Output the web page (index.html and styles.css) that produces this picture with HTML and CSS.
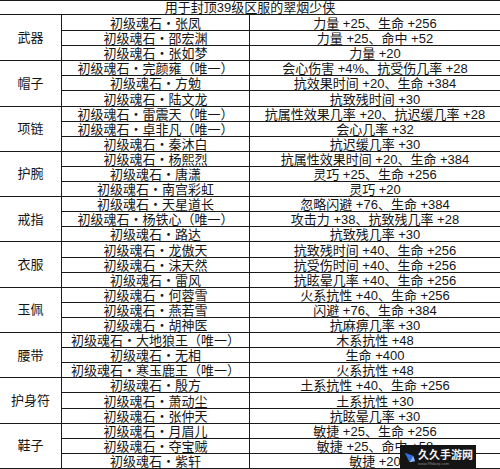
FILE: index.html
```html
<!DOCTYPE html>
<html lang="zh">
<head>
<meta charset="utf-8">
<link rel="stylesheet" href="styles.css">
</head>
<body>
<div class="sheet">
  <div class="title">用于封顶39级区服的翠烟少侠</div>

  <div class="cat">武器</div>
  <div class="item">初级魂石・张凤</div><div class="stat">力量 +25、生命 +256</div>
  <div class="item">初级魂石・邵宏渊</div><div class="stat">力量 +25、命中 +52</div>
  <div class="item">初级魂石・张如梦</div><div class="stat">力量 +20</div>

  <div class="cat">帽子</div>
  <div class="item">初级魂石・完颜雍（唯一）</div><div class="stat">会心伤害 +4%、抗受伤几率 +28</div>
  <div class="item">初级魂石・方勉</div><div class="stat">抗效果时间 +20、生命 +384</div>
  <div class="item">初级魂石・陆文龙</div><div class="stat">抗致残时间 +30</div>

  <div class="cat">项链</div>
  <div class="item">初级魂石・雷震天（唯一）</div><div class="stat">抗属性效果几率 +20、抗迟缓几率 +28</div>
  <div class="item">初级魂石・卓非凡（唯一）</div><div class="stat">会心几率 +32</div>
  <div class="item">初级魂石・秦沐白</div><div class="stat">抗迟缓几率 +30</div>

  <div class="cat">护腕</div>
  <div class="item">初级魂石・杨熙烈</div><div class="stat">抗属性效果时间 +20、生命 +384</div>
  <div class="item">初级魂石・唐潇</div><div class="stat">灵巧 +25、生命 +256</div>
  <div class="item">初级魂石・南宫彩虹</div><div class="stat">灵巧 +20</div>

  <div class="cat">戒指</div>
  <div class="item">初级魂石・天星道长</div><div class="stat">忽略闪避 +76、生命 +384</div>
  <div class="item">初级魂石・杨铁心（唯一）</div><div class="stat">攻击力 +38、抗致残几率 +28</div>
  <div class="item">初级魂石・路达</div><div class="stat">抗致残几率 +30</div>

  <div class="cat">衣服</div>
  <div class="item">初级魂石・龙傲天</div><div class="stat">抗致残时间 +40、生命 +256</div>
  <div class="item">初级魂石・沫天然</div><div class="stat">抗受伤时间 +40、生命 +256</div>
  <div class="item">初级魂石・雷风</div><div class="stat">抗眩晕几率 +40、生命 +256</div>

  <div class="cat">玉佩</div>
  <div class="item">初级魂石・何蓉雪</div><div class="stat">火系抗性 +40、生命 +256</div>
  <div class="item">初级魂石・燕若雪</div><div class="stat">闪避 +76、生命 +384</div>
  <div class="item">初级魂石・胡神医</div><div class="stat">抗麻痹几率 +30</div>

  <div class="cat">腰带</div>
  <div class="item">初级魂石・大地狼王（唯一）</div><div class="stat">木系抗性 +48</div>
  <div class="item">初级魂石・无相</div><div class="stat">生命 +400</div>
  <div class="item">初级魂石・寒玉鹿王（唯一）</div><div class="stat">火系抗性 +48</div>

  <div class="cat">护身符</div>
  <div class="item">初级魂石・殷方</div><div class="stat">土系抗性 +40、生命 +256</div>
  <div class="item">初级魂石・萧动尘</div><div class="stat">土系抗性 +30</div>
  <div class="item">初级魂石・张仲天</div><div class="stat">抗眩晕几率 +30</div>

  <div class="cat">鞋子</div>
  <div class="item">初级魂石・月眉儿</div><div class="stat">敏捷 +25、生命 +256</div>
  <div class="item">初级魂石・夺宝贼</div><div class="stat">敏捷 +25、命中 +58</div>
  <div class="item">初级魂石・紫轩</div><div class="stat">敏捷 +20</div>

  <div class="badge">
    <svg class="badge-icon" viewBox="0 0 14 14" width="13" height="13">
      <path d="M2 2 L11 5 L7 12 Z" fill="#2f6fe0"/>
      <path d="M7 12 L11 5 L13 11 Z" fill="#8fb8ff"/>
    </svg>
    <div class="badge-text">
      <span class="badge-name">久久手游网</span>
      <span class="badge-sub">www.99danji.com</span>
    </div>
  </div>
</div>
</body>
</html>
```

FILE: styles.css
```css
html, body {
  margin: 0;
  padding: 0;
  background: #fff;
}

.sheet {
  position: relative;
  width: 500px;
  height: 469px;
  box-sizing: border-box;
  border-top: 1px solid #1a1a1a;
  display: grid;
  grid-template-columns: 62px 188px 250px;
  grid-template-rows: 14px 16px repeat(29, 1fr);
  font-family: "Liberation Sans", "Noto Sans CJK SC", sans-serif;
  font-size: 13px;
  color: #151515;
  overflow: hidden;
}

.title,
.cat,
.item,
.stat {
  display: flex;
  justify-content: center;
  white-space: nowrap;
  line-height: 13px;
  border-bottom: 1px solid #1a1a1a;
}

.title {
  grid-column: 1 / -1;
  align-items: flex-end;
}

.cat {
  grid-column: 1;
  grid-row: span 3;
  align-items: center;
  border-right: 1px solid #1a1a1a;
}

.item {
  grid-column: 2;
  align-items: flex-end;
  border-right: 1px solid #1a1a1a;
}

.stat {
  grid-column: 3;
  align-items: flex-end;
}

.badge {
  position: absolute;
  left: 400px;
  top: 444px;
  width: 76px;
  height: 25px;
  background: #151515;
  display: flex;
  align-items: center;
  gap: 2px;
  padding-left: 3px;
  box-sizing: border-box;
}

.badge-icon {
  flex: none;
}

.badge-text {
  display: flex;
  flex-direction: column;
  line-height: 1;
  white-space: nowrap;
}

.badge-name {
  font-family: "Noto Sans CJK SC", sans-serif;
  font-weight: bold;
  font-size: 11px;
  color: #f2f2f2;
}

.badge-sub {
  font-size: 4px;
  color: #888;
  margin-top: 2px;
}
```
